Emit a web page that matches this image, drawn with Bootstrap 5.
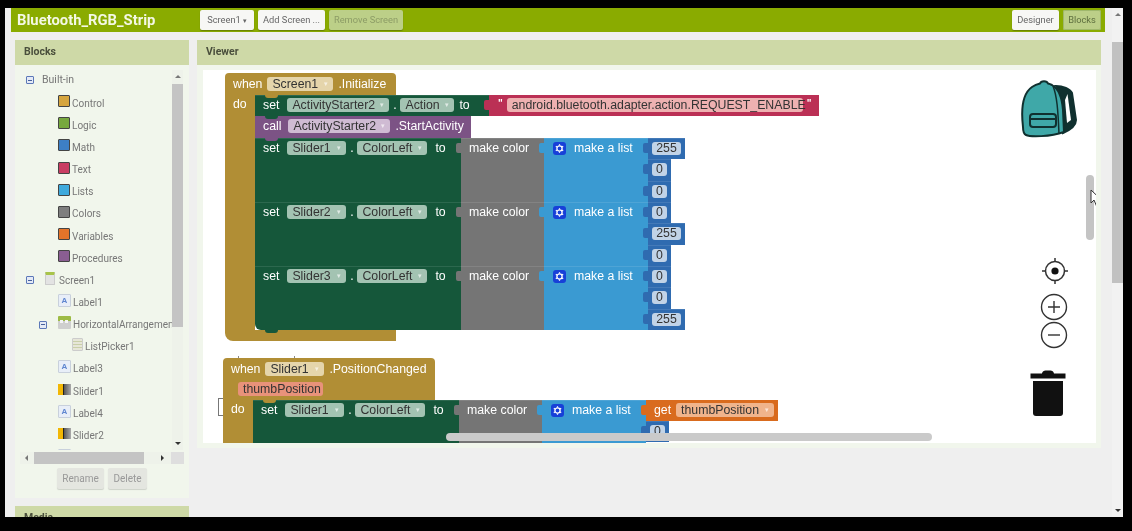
<!DOCTYPE html>
<html lang="en">
<head>
    <meta charset="UTF-8">
    <meta name="viewport" content="width=device-width, initial-scale=1.0">
    <title>Bluetooth_RGB_Strip</title>
    <link href="https://cdn.jsdelivr.net/npm/bootstrap@5.3.0/dist/css/bootstrap.min.css" rel="stylesheet">
    <style>
        html, body { height: 531px; overflow: hidden; background: #000; margin: 0; }
        body { font-family: Roboto, "Liberation Sans", sans-serif; }
        .app-frame { width: 1118px; height: 509px; margin: 8px 0 0 5px; background: #efefef; filter: blur(.6px); overflow: hidden; }
        .app-main { width: 1107px; padding: 0 7px 0 6px; }

        /* top bar */
        .top-bar { height: 24px; background: #8aab00; padding: 1px 4px 2px 6px; }
        .app-title { width: 179px; color: #f4f8e4; font: bold 14.8px Roboto, sans-serif; white-space: nowrap; }
        .bar-btn { height: 20px; padding: 0; font-size: 9.3px; line-height: 19px; color: #666; background: #f7f7f5; border: 0; border-radius: 2px; box-shadow: 0 1px 1px rgba(0,0,0,.25); white-space: nowrap; }
        .bar-btn.off { background: #bccf88; color: #8c9c66; }
        .bar-btn.on { background: #bccf88; color: #5f7040; box-shadow: inset 0 0 0 1px #9fb86c; }
        .btn-screen { width: 54px; }
        .btn-add { width: 67px; }
        .btn-remove { width: 74px; }
        .btn-designer { width: 47px; }
        .btn-blocks { width: 38px; }
        .caret-mark { font-size: 7px; margin-left: 2px; }

        /* panels */
        .work-row { padding: 8px 0 0 4px; gap: 8px; }
        .side-col { width: 174px; gap: 8px; }
        .panel-head { height: 25px; background: #ced9a7; color: #4a4f3c; font-size: 10.5px; font-weight: 700; line-height: 24px; padding-left: 9px; }
        .blocks-panel { height: 458px; background: #f1f6ec; }
        .tree-wrap { padding: 5px 5px 0 5px; height: 387px; }
        .tree-box { width: 152px; height: 380px; overflow: hidden; color: #777; font-size: 10px; }
        .tree-row { height: 22.15px; white-space: nowrap; }
        .ind-0 { padding: 0 0 2px 6px; font-size: 10.5px; }
        .ind-1 { padding-left: 38px; }
        .ind-2 { padding-left: 19px; }
        .ind-3 { padding-left: 52px; }
        .ind-s { padding-left: 6px; }
        .tog { width: 8px; height: 8px; border: 1px solid #5c78b8; border-radius: 1px; background: #e4eaf6; margin-right: 8px; flex: none; position: relative; }
        .tog::after { content: ""; position: absolute; left: 1px; right: 1px; top: 2.5px; height: 1px; background: #46609c; }
        .ind-s .tog { margin-right: 11px; }
        .ind-2 .tog { margin-right: 11px; }
        .sw { width: 12px; height: 12px; border: 1px solid #444; border-radius: 1px; margin: -4px 2px 0 0; flex: none; }
        .sw-control { background: #d6a53e; }
        .sw-logic { background: #77a83e; }
        .sw-math { background: #3d7fc6; }
        .sw-text { background: #c93d63; }
        .sw-lists { background: #3fa9dc; }
        .sw-colors { background: #7e7e7e; }
        .sw-vars { background: #e4742a; }
        .sw-procs { background: #8a5e92; }
        .ic { width: 13px; height: 13px; margin: -4px 2px 0 0; flex: none; border-radius: 1px; }
        .ic-screen { width: 10px; height: 13px; margin-right: 4px; background: #e3e3e3; border: 1px solid #ccc; border-top: 3px solid #a8c44a; }
        .ic-label { background: #e8eef8; border: 1px solid #c8d0dc; color: #5f86d0; font: bold 8px/11px "Liberation Sans", sans-serif; text-align: center; }
        .ic-harr { background: #cfcfcf; border-top: 5px solid #9dbb45; position: relative; }
        .ic-harr::after { content: ""; position: absolute; left: 2px; top: -1px; width: 3px; height: 3px; background: #f4f4f4; box-shadow: 5px 0 #f4f4f4; }
        .ic-lp { width: 11px; height: 13px; background: repeating-linear-gradient(#e6e6d8 0 2px, #c9cfa8 2px 3px); border: 1px solid #ccc; }
        .ic-slider { height: 11px; background: linear-gradient(90deg, #f2b705 0 35%, #222 35% 45%, #555 45%, #aaa); border-radius: 0; }
        .v-track { width: 11px; height: 380px; position: relative; background: #eef2ea; }
        .v-thumb { position: absolute; left: 0; right: 0; top: 14px; height: 243px; background: #c4c4c4; }
        .arr-u, .arr-d { position: absolute; left: 3px; width: 0; height: 0; border-left: 3px solid transparent; border-right: 3px solid transparent; }
        .arr-u { top: 5px; border-bottom: 3px solid #777; }
        .arr-d { bottom: 5px; border-top: 3px solid #333; }
        .h-track { height: 12px; margin: 0 5px; position: relative; background: #eef2ea; }
        .h-thumb { position: absolute; left: 14px; top: 0; bottom: 0; width: 110px; background: #c4c4c4; }
        .h-corner { position: absolute; right: 0; top: 0; bottom: 0; width: 13px; background: #dedede; }
        .arr-l, .arr-r { position: absolute; top: 3px; width: 0; height: 0; border-top: 3px solid transparent; border-bottom: 3px solid transparent; }
        .arr-l { left: 5px; border-right: 3px solid #777; }
        .arr-r { right: 20px; border-left: 3px solid #333; }
        .tree-actions { padding: 4px 0 0 42px; gap: 4px; }
        .gray-btn { height: 21px; padding: 0; font-size: 10px; line-height: 20px; background: #e4e6e0; color: #999; border: 0; border-radius: 2px; box-shadow: 0 1px 1px rgba(0,0,0,.15); }
        .btn-rename { width: 47px; }
        .btn-delete { width: 39px; }

        /* viewer */
        .viewer-panel { width: 904px; height: 408px; background: #f1f6ec; }
        .viewer-body { padding: 5px 5px 5px 6px; height: 383px; }
        .canvas-area { height: 373px; background: #fff; position: relative; overflow: hidden; font: 12.3px "Liberation Sans", sans-serif; color: #fff; }

        /* blocks */
        .ev { position: absolute; }
        .ev-1 { left: 22px; top: 3px; }
        .ev-2 { left: 20px; top: 288px; }
        .ev-2::before { content: ""; position: absolute; left: 15px; top: -2px; width: 1px; height: 2px; background: #888; box-shadow: 56px 0 #888; }
        .ev-head, .ev-arm, .ev-foot { background: #b18e35; }
        .ev-head { height: 22px; width: 171px; border-radius: 4px 4px 0 0; padding-left: 8px; gap: 5px; }
        .ev-2 .ev-head { width: 212px; height: 42px; display: block !important; padding-top: 4px; }
        .head-line { gap: 5px; height: 14px; }
        .head-line + .head-line { margin: 6px 0 0 7px; }
        .ev-arm { width: 30px; padding: 2px 0 0 8px; position: relative; }
        .ev-foot { width: 171px; height: 11px; border-radius: 0 0 0 8px; }
        .st-row { height: 64px; }
        .st-set { width: 206px; background: #15573a; padding: 3px 0 0 8px; gap: 5px; position: relative; box-shadow: inset 0 1px rgba(255,255,255,.1); }
        .st-set > span:first-child { margin-right: 3px; }
        .st-last { border-bottom-left-radius: 6px; }
        .st-notch::before { content: ""; position: absolute; left: 10px; top: 0; width: 13px; height: 3px; background: #b18e35; border-radius: 0 0 6px 6px; }
        .st-notch-p::before { background: #7c5385; }
        .st-notch-g::before { background: #15573a; }
        .fld { height: 14px; line-height: 14px; padding: 0 5px; border-radius: 3px; color: #333; white-space: nowrap; position: relative; display: flex; justify-content: space-between; align-items: center; flex: none; }
        .fld::after { content: "▾"; font-size: 7px; opacity: .65; margin-left: 4px; color: #fff; }
        .fld-green { background: #a3c3b2; }
        .fld-purple { background: #cfbbd3; }
        .fld-gold { background: #e5d5ab; }
        .fld-orange { background: #f0b48c; }
        .fld-plain::after { display: none; }
        .fld-param { background: #e8927a; width: 85px; }
        .w-as { width: 102px; }
        .w-action { width: 54px; }
        .w-slider { width: 59px; }
        .w-colorleft { width: 70px; }
        .w-screen { width: 66px; }
        .w-thumb { width: 98px; }
        .txt-dot { margin: 0 -1.2px; }
        .to-word { margin-left: 3px; }
        .val { position: relative; height: 100%; }
        .val::before { content: ""; position: absolute; left: -5px; top: 5px; width: 5px; height: 10px; border-radius: 2px 0 0 2px; background: inherit; }
        .val-color { width: 83px; background: #757575; padding: 3px 0 0 8px; box-shadow: inset 0 1px rgba(255,255,255,.1); }
        .val-list { width: 104px; background: #3a9ad2; padding: 3px 0 0 9px; gap: 8px; box-shadow: inset 0 1px rgba(255,255,255,.1); }
        .gear { width: 13px; height: 13px; margin-top: 1px; flex: none; display: block; }
        .nums { width: 37px; }
        .num { height: 21.33px; background: #2f6bb0; position: relative; padding: 4px 0 0 4px; box-shadow: inset 0 1px rgba(255,255,255,.1); }
        .num::before { content: ""; position: absolute; left: -5px; top: 5px; width: 5px; height: 10px; border-radius: 2px 0 0 2px; background: #2f6bb0; }
        .num-s { width: 23px; }
        .num-l { width: 37px; }
        .num-gap { height: 21px; }
        .num-box { display: block; height: 13px; line-height: 13px; background: #c1d3e7; color: #333; border-radius: 3px; text-align: center; }
        .num-s .num-box { width: 15px; }
        .num-l .num-box { width: 29px; }
        .st-action { height: 21px; }
        .st-set-a { width: 234px; height: 21px; }
        .val-text { width: 330px; background: #bb3055; height: 21px; padding: 3px 0 0 9px; gap: 4px; }
        .val-text .quote { font-size: 10px; font-weight: 700; line-height: 11px; }
        .fld-text { background: #eeb1b1; width: 296px; }
        .st-call { width: 216px; height: 22px; background: #7c5385; padding: 3px 0 0 8px; gap: 5px; position: relative; }
        .st-call > span:first-child { margin-right: 2px; }
        .st-get { background: #d96b1e; width: 132px; height: 21px; padding: 3px 0 0 8px; gap: 5px; position: absolute; left: 393px; top: 0; }
        .st-get::before { content: ""; position: absolute; left: -5px; top: 5px; width: 5px; height: 10px; border-radius: 2px 0 0 2px; background: #d96b1e; }
        .list-wrap { position: relative; }
        .ev-foot-wrap { position: relative; }
        .foot-notch { position: absolute; left: 40px; top: 0; width: 13px; height: 3px; background: #15573a; border-radius: 0 0 6px 6px; }

        /* things lying over the canvas */
        .ws-hbar { position: absolute; left: 243px; top: 363px; width: 486px; height: 8px; border-radius: 4px; background: #cacaca; }
        .ws-vbar { position: absolute; left: 883px; top: 105px; width: 8px; height: 65px; border-radius: 4px; background: #c4c4c4; }
        .ws-icon { position: absolute; display: block; }
        .ic-backpack { left: 817px; top: 10px; }
        .ic-target { left: 838px; top: 187px; }
        .ic-plus { left: 837px; top: 223px; }
        .ic-minus { left: 837px; top: 251px; }
        .ic-trash { left: 827px; top: 300px; }
        .ic-cursor { left: 887px; top: 119px; }
        .cmt-box { position: absolute; left: 15px; top: 328px; width: 6px; height: 18px; border: 1px solid #777; border-right: 0; }

        /* page scrollbar */
        .page-bar { width: 11px; height: 509px; background: #f2f2f2; position: relative; }
        .page-thumb { position: absolute; left: 0; right: 0; top: 34px; height: 241px; background: #c1c1c1; }
    </style>
</head>
<body>
<svg width="0" height="0" class="position-absolute">
    <symbol id="gear-icon" viewBox="0 0 13 13">
        <rect width="13" height="13" rx="3" fill="#1740d8"/>
        <circle cx="6.500" cy="6.500" r="2.600" fill="none" stroke="#fff" stroke-width="1.300"/>
        <path d="M6.500 2.300 V3.500 M6.500 9.500 V10.700 M2.800 4.400 L3.900 5 M9.100 8 L10.200 8.600 M2.800 8.600 L3.900 8 M9.100 5 L10.200 4.400" stroke="#fff" stroke-width="1.200"/>
    </symbol>
</svg>
<div class="app-frame d-flex">
    <div class="app-main">
        <div class="top-bar d-flex align-items-center gap-1">
            <div class="app-title">Bluetooth_RGB_Strip</div>
            <button class="btn bar-btn btn-screen">Screen1<span class="caret-mark">▾</span></button>
            <button class="btn bar-btn btn-add">Add Screen ...</button>
            <button class="btn bar-btn off btn-remove">Remove Screen</button>
            <div class="ms-auto d-flex gap-1">
                <button class="btn bar-btn btn-designer">Designer</button>
                <button class="btn bar-btn on btn-blocks">Blocks</button>
            </div>
        </div>

        <div class="work-row d-flex">
            <div class="side-col d-flex flex-column">
                <div class="blocks-panel">
                    <div class="panel-head">Blocks</div>
                    <div class="tree-wrap d-flex">
                        <div class="tree-box">
                            <div class="tree-row d-flex align-items-center ind-0"><span class="tog"></span><span>Built-in</span></div>
                            <div class="tree-row d-flex align-items-center ind-1"><span class="sw sw-control"></span>Control</div>
                            <div class="tree-row d-flex align-items-center ind-1"><span class="sw sw-logic"></span>Logic</div>
                            <div class="tree-row d-flex align-items-center ind-1"><span class="sw sw-math"></span>Math</div>
                            <div class="tree-row d-flex align-items-center ind-1"><span class="sw sw-text"></span>Text</div>
                            <div class="tree-row d-flex align-items-center ind-1"><span class="sw sw-lists"></span>Lists</div>
                            <div class="tree-row d-flex align-items-center ind-1"><span class="sw sw-colors"></span>Colors</div>
                            <div class="tree-row d-flex align-items-center ind-1"><span class="sw sw-vars"></span>Variables</div>
                            <div class="tree-row d-flex align-items-center ind-1"><span class="sw sw-procs"></span>Procedures</div>
                            <div class="tree-row d-flex align-items-center ind-s"><span class="tog"></span><span class="ic ic-screen"></span>Screen1</div>
                            <div class="tree-row d-flex align-items-center ind-1"><span class="ic ic-label">A</span>Label1</div>
                            <div class="tree-row d-flex align-items-center ind-2"><span class="tog"></span><span class="ic ic-harr"></span>HorizontalArrangement1</div>
                            <div class="tree-row d-flex align-items-center ind-3"><span class="ic ic-lp"></span>ListPicker1</div>
                            <div class="tree-row d-flex align-items-center ind-1"><span class="ic ic-label">A</span>Label3</div>
                            <div class="tree-row d-flex align-items-center ind-1"><span class="ic ic-slider"></span>Slider1</div>
                            <div class="tree-row d-flex align-items-center ind-1"><span class="ic ic-label">A</span>Label4</div>
                            <div class="tree-row d-flex align-items-center ind-1"><span class="ic ic-slider"></span>Slider2</div>
                            <div class="tree-row d-flex align-items-center ind-1"><span class="ic ic-label"></span></div>
                        </div>
                        <div class="v-track"><span class="arr-u"></span><span class="v-thumb"></span><span class="arr-d"></span></div>
                    </div>
                    <div class="h-track"><span class="arr-l"></span><span class="h-thumb"></span><span class="arr-r"></span><span class="h-corner"></span></div>
                    <div class="tree-actions d-flex">
                        <button class="btn gray-btn btn-rename">Rename</button>
                        <button class="btn gray-btn btn-delete">Delete</button>
                    </div>
                </div>
                <div class="panel-head">Media</div>
            </div>

            <div class="viewer-panel">
                <div class="panel-head">Viewer</div>
                <div class="viewer-body">
                    <div class="canvas-area">
                        <span class="cmt-box"></span>

                        <!-- Screen1.Initialize -->
                        <div class="ev ev-1">
                            <div class="ev-head d-flex align-items-center">
                                <span>when</span><span class="fld fld-gold w-screen">Screen1</span><span>.Initialize</span>
                            </div>
                            <div class="d-flex">
                                <div class="ev-arm">do</div>
                                <div class="d-flex flex-column">
                                    <div class="d-flex st-action">
                                        <div class="st-set st-set-a st-notch d-flex">
                                            <span>set</span><span class="fld fld-green w-as">ActivityStarter2</span><span class="txt-dot">.</span><span class="fld fld-green w-action">Action</span><span>to</span>
                                        </div>
                                        <div class="val val-text d-flex"><span class="quote">"</span><span class="fld fld-plain fld-text">android.bluetooth.adapter.action.REQUEST_ENABLE</span><span class="quote">"</span></div>
                                    </div>
                                    <div class="st-call st-notch st-notch-g d-flex">
                                        <span>call</span><span class="fld fld-purple w-as">ActivityStarter2</span><span>.StartActivity</span>
                                    </div>
                                    <div class="d-flex st-row">
                                        <div class="st-set st-notch st-notch-p d-flex"><span>set</span><span class="fld fld-green w-slider">Slider1</span><span class="txt-dot">.</span><span class="fld fld-green w-colorleft">ColorLeft</span><span class="to-word">to</span></div>
                                        <div class="val val-color">make color</div>
                                        <div class="val val-list d-flex"><svg class="gear"><use href="#gear-icon"/></svg><span>make a list</span></div>
                                        <div class="nums">
                                            <div class="num num-l"><span class="num-box">255</span></div>
                                            <div class="num num-s"><span class="num-box">0</span></div>
                                            <div class="num num-s"><span class="num-box">0</span></div>
                                        </div>
                                    </div>
                                    <div class="d-flex st-row">
                                        <div class="st-set d-flex"><span>set</span><span class="fld fld-green w-slider">Slider2</span><span class="txt-dot">.</span><span class="fld fld-green w-colorleft">ColorLeft</span><span class="to-word">to</span></div>
                                        <div class="val val-color">make color</div>
                                        <div class="val val-list d-flex"><svg class="gear"><use href="#gear-icon"/></svg><span>make a list</span></div>
                                        <div class="nums">
                                            <div class="num num-s"><span class="num-box">0</span></div>
                                            <div class="num num-l"><span class="num-box">255</span></div>
                                            <div class="num num-s"><span class="num-box">0</span></div>
                                        </div>
                                    </div>
                                    <div class="d-flex st-row">
                                        <div class="st-set st-last d-flex"><span>set</span><span class="fld fld-green w-slider">Slider3</span><span class="txt-dot">.</span><span class="fld fld-green w-colorleft">ColorLeft</span><span class="to-word">to</span></div>
                                        <div class="val val-color">make color</div>
                                        <div class="val val-list d-flex"><svg class="gear"><use href="#gear-icon"/></svg><span>make a list</span></div>
                                        <div class="nums">
                                            <div class="num num-s"><span class="num-box">0</span></div>
                                            <div class="num num-s"><span class="num-box">0</span></div>
                                            <div class="num num-l"><span class="num-box">255</span></div>
                                        </div>
                                    </div>
                                </div>
                            </div>
                            <div class="ev-foot-wrap"><div class="ev-foot"></div><span class="foot-notch"></span></div>
                        </div>

                        <!-- Slider1.PositionChanged -->
                        <div class="ev ev-2">
                            <div class="ev-head d-flex">
                                <div class="head-line d-flex align-items-center"><span>when</span><span class="fld fld-gold w-slider">Slider1</span><span>.PositionChanged</span></div>
                                <div class="head-line d-flex align-items-center"><span class="fld fld-plain fld-param">thumbPosition</span></div>
                            </div>
                            <div class="d-flex">
                                <div class="ev-arm">do</div>
                                <div class="d-flex st-row list-wrap">
                                    <div class="st-set st-notch d-flex"><span>set</span><span class="fld fld-green w-slider">Slider1</span><span class="txt-dot">.</span><span class="fld fld-green w-colorleft">ColorLeft</span><span class="to-word">to</span></div>
                                    <div class="val val-color">make color</div>
                                    <div class="val val-list d-flex"><svg class="gear"><use href="#gear-icon"/></svg><span>make a list</span></div>
                                    <div class="st-get d-flex"><span>get</span><span class="fld fld-orange w-thumb">thumbPosition</span></div>
                                    <div class="nums">
                                        <div class="num-gap"></div>
                                        <div class="num num-s"><span class="num-box">0</span></div>
                                    </div>
                                </div>
                            </div>
                        </div>

                        <span class="ws-hbar"></span>
                        <span class="ws-vbar"></span>

                        <svg class="ws-icon ic-backpack" width="58" height="58" viewBox="0 0 58 58" fill="none" stroke="#10302f" stroke-width="2">
                            <path d="M36 6 C43 6 50 9 52 13 L56 40 C56 46 50 50 43 53 L42 30 C41 18 39 9 36 6Z" fill="#10302f"/>
                            <path d="M47.500 14 L51 40 L47 43 L45 20Z" fill="#fff" stroke="none"/>
                            <path d="M3 47 C1 30 2 14 12 7 C15 5 18 4 20 3.500 C21 .5 27 .5 28 3.500 C30 4 31 4.500 32 5 C39 9 42 18 43 30 L44 52 C30 57 10 57 6 55 C4 54 3 52 3 47Z" fill="#3fa8a8"/>
                            <path d="M33 6 C37 16 38 30 39 54" stroke-width="1.500"/>
                            <rect x="10" y="34" width="26" height="13" rx="3" fill="#3fa8a8"/>
                            <path d="M10 39 H36"/>
                        </svg>
                        <svg class="ws-icon ic-target" width="28" height="28" viewBox="0 0 28 28" fill="none" stroke="#333" stroke-width="1.500">
                            <circle cx="14" cy="14" r="9.500"/><circle cx="14" cy="14" r="3.600" fill="#111" stroke="none"/>
                            <path d="M14 1 V4.500 M14 23.500 V27 M1 14 H4.500 M23.500 14 H27"/>
                        </svg>
                        <svg class="ws-icon ic-plus" width="28" height="28" viewBox="0 0 28 28" fill="#fff" stroke="#333" stroke-width="1.400">
                            <circle cx="14" cy="14" r="12.500"/><path d="M14 8 V20 M8 14 H20"/>
                        </svg>
                        <svg class="ws-icon ic-minus" width="28" height="28" viewBox="0 0 28 28" fill="#fff" stroke="#333" stroke-width="1.400">
                            <circle cx="14" cy="14" r="12.500"/><path d="M8 14 H20"/>
                        </svg>
                        <svg class="ws-icon ic-trash" width="36" height="47" viewBox="0 0 36 47" fill="#111">
                            <path d="M.5 3.500 H12 C12.500 1 14 .5 18 .5 C22 .5 23.500 1 24 3.500 H35.500 V8.500 H.5Z"/>
                            <path d="M3 11 H33 V43 C33 45 32 46 30 46 H6 C4 46 3 45 3 43Z"/>
                        </svg>
                        <svg class="ws-icon ic-cursor" width="12" height="19" viewBox="0 0 12 19" fill="#fff" stroke="#333" stroke-width="1">
                            <path d="M1 1 V14 L4 11 L6.500 17 L9 16 L6.500 10.500 H11Z"/>
                        </svg>
                    </div>
                </div>
            </div>
        </div>
    </div>
    <div class="page-bar"><span class="arr-u"></span><span class="page-thumb"></span><span class="arr-d"></span></div>
</div>
<script src="https://cdn.jsdelivr.net/npm/bootstrap@5.3.0/dist/js/bootstrap.bundle.min.js"></script>
</body>
</html>
